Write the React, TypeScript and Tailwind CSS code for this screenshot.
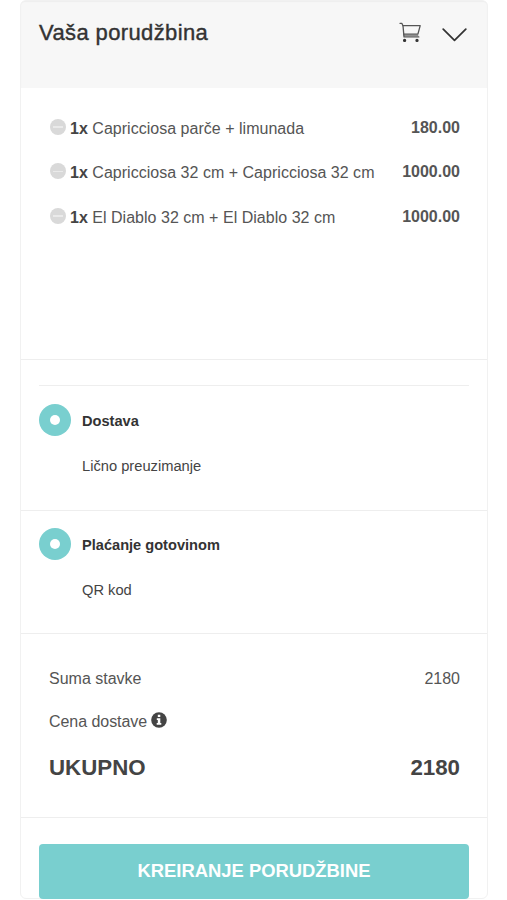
import type { ReactNode } from "react";

type OrderItem = { qty: number; name: string; price: string };

const items: OrderItem[] = [
  { qty: 1, name: "Capricciosa parče + limunada", price: "180.00" },
  { qty: 1, name: "Capricciosa 32 cm + Capricciosa 32 cm", price: "1000.00" },
  { qty: 1, name: "El Diablo 32 cm + El Diablo 32 cm", price: "1000.00" },
];

function CartIcon() {
  return (
    <svg width="23" height="21" viewBox="0 0 23 21" fill="none" stroke="#555" strokeWidth="1.3" strokeLinecap="round" strokeLinejoin="round">
      <path d="M1 1.3h1.8l1.2 2.4 1 11.2h14.8" />
      <path d="M4 3.7h17.2l-2.3 8.5H4.9" />
      <path d="M4.9 13.3h14" strokeWidth="0.8" />
      <circle cx="5.6" cy="18.4" r="1" fill="#333" stroke="#333" />
      <circle cx="18" cy="18.4" r="1" fill="#333" stroke="#333" />
    </svg>
  );
}

function ChevronIcon() {
  return (
    <svg width="25" height="14" viewBox="0 0 25 14" fill="none" stroke="#333" strokeWidth="1.7" strokeLinecap="round" strokeLinejoin="round">
      <path d="M1.2 1.2 12.5 12.4 23.8 1.2" />
    </svg>
  );
}

function RemoveButton() {
  return (
    <button className="flex size-4 shrink-0 items-center justify-center rounded-full bg-[#d9d9d9]">
      <span className="h-[1.5px] w-2.5 bg-[#eaeaea]" />
    </button>
  );
}

function InfoIcon() {
  return (
    <svg width="16" height="16" viewBox="0 0 16 16">
      <circle cx="8" cy="8" r="7.8" fill="#444" />
      <path fill="#fff" d="M6.8 2.7h2.5v2.2H6.8zM5.8 6.2h3.5v4.9h1v1.7H5.7v-1.7h1.1V7.9h-1z" />
    </svg>
  );
}

function OptionGroup({ selected, other }: { selected: ReactNode; other: ReactNode }) {
  return (
    <div className="text-[14.7px] leading-6 text-[#444]">
      <div className="flex h-8 items-center gap-[11px]">
        <span className="flex size-8 items-center justify-center rounded-full bg-[#79cfcf]">
          <span className="size-2.5 rounded-full bg-white" />
        </span>
        <span className="pt-0.5 text-[14.6px] font-bold text-[#333]">{selected}</span>
      </div>
      <div className="mt-[18px] pl-[43px]">{other}</div>
    </div>
  );
}

export default function App() {
  return (
    <div className="h-[900px] overflow-hidden bg-white pl-5 pr-[18px] font-['Liberation_Sans',Arial,sans-serif]">
      <div className="flex h-[899px] w-[468px] flex-col rounded-md border border-[#f1f1f1]">
        {/* Header */}
        <header className="flex h-[87px] shrink-0 justify-between rounded-t bg-[#f7f7f7] pl-[18px] pr-5 shadow-[inset_0_1px_1px_#eeeeee]">
          <h1 className="pt-4 text-[22px] leading-8 tracking-[0.38px] text-[#333] [-webkit-text-stroke:0.4px_#333]">Vaša porudžbina</h1>
          <div className="flex h-6 gap-5 pt-[21px]">
            <CartIcon />
            <span className="pt-[6px]"><ChevronIcon /></span>
          </div>
        </header>

        {/* Items */}
        <section className="flex h-[272px] shrink-0 flex-col gap-[20.4px] border-b border-[#eeeeee] pl-[29px] pr-[27px] pt-[28.8px] text-base text-[#555]">
          {items.map((item) => (
            <div key={item.name} className="flex h-6 justify-between leading-6">
              <div className="flex gap-1">
                <span className="pt-[2.2px]"><RemoveButton /></span>
                <span className="tracking-[0.02px]"><b className="text-[#444]">{item.qty}x</b> {item.name}</span>
              </div>
              <b className="-mt-px text-[#555]">{item.price}</b>
            </div>
          ))}
        </section>

        {/* Delivery */}
        <section className="h-[151px] shrink-0 border-b border-[#eeeeee] px-[18px] pt-[25px]">
          <div className="border-t border-[#eeeeee] pt-[18px]">
            <OptionGroup selected="Dostava" other="Lično preuzimanje" />
          </div>
        </section>

        {/* Payment */}
        <section className="h-[123px] shrink-0 border-b border-[#eeeeee] px-[18px] pt-[17px]">
          <OptionGroup selected="Plaćanje gotovinom" other="QR kod" />
        </section>

        {/* Totals */}
        <section className="h-[184px] shrink-0 border-b border-[#eeeeee] pl-7 pr-[27px] pt-[33px] text-base leading-6 text-[#555]">
          <div className="flex justify-between">
            <span>Suma stavke</span>
            <span>2180</span>
          </div>
          <div className="mt-[19px] flex gap-1">
            <span className="tracking-[-0.05px]">Cena dostave</span>
            <span className="pt-[2px]"><InfoIcon /></span>
          </div>
          <div className="mt-[18px] flex justify-between text-[22.3px] font-bold leading-8 text-[#444]">
            <span>UKUPNO</span>
            <span>2180</span>
          </div>
        </section>

        <div className="px-[18px] pt-[26px]">
          <button className="h-[55px] w-full rounded bg-[#79cfcf] pb-0.5 text-[18.4px] font-bold text-white">KREIRANJE PORUDŽBINE</button>
        </div>
      </div>
    </div>
  );
}
